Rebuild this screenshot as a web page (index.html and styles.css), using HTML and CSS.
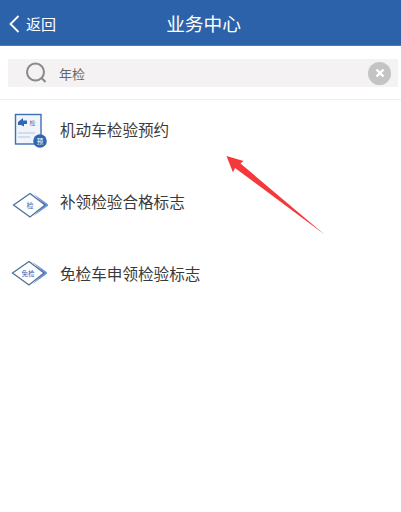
FILE: index.html
```html
<!DOCTYPE html>
<html lang="zh">
<head>
<meta charset="utf-8">
<title>业务中心</title>
<link rel="stylesheet" href="styles.css">
</head>
<body>
<div class="page">
  <header class="bar">
    <div class="back">
      <svg class="chev" viewBox="0 0 12 20" width="12" height="20"><path d="M10.500 2 2.500 10l8 8" fill="none" stroke="#fff" stroke-width="1.800"/></svg>
      <span>返回</span>
    </div>
    <h1 class="title">业务中心</h1>
  </header>
  <div class="searchwrap">
    <div class="search">
      <svg class="mag" viewBox="0 0 22 22" width="22" height="22"><circle cx="10.500" cy="10" r="8.500" fill="none" stroke="#8a8a8a" stroke-width="2"/><path d="M16.500 16l4 4" stroke="#8a8a8a" stroke-width="2.200" fill="none"/></svg>
      <span class="query">年检</span>
      <span class="clear"><svg viewBox="0 0 10 10" width="10" height="10"><path d="M1.500 1.500l7 7M8.500 1.500l-7 7" stroke="#fff" stroke-width="2.400"/></svg></span>
    </div>
  </div>
  <ul class="list">
    <li class="item">
      <svg class="icon icon-doc" viewBox="0 0 36 36" width="36" height="36">
        <rect x="3.500" y="1.500" width="25.500" height="29.500" fill="#f1f5fb" stroke="#3f6fb3" stroke-width="1.400"/>
        <path d="M6 9l5-4v2.500h4v3.500h-3v2.500L9 12H6z" fill="#2f67b5"/>
        <text x="17.500" y="12" font-size="6" fill="#4a6fa8" class="t">检</text>
        <path d="M6 20h17M6 24h12" stroke="#b4c4dc" stroke-width="1.200"/>
        <circle cx="28" cy="28" r="6.800" fill="#2f67b5"/>
        <text x="24.800" y="30.500" font-size="6.500" fill="#fff" class="t">预</text>
      </svg>
      <span class="label">机动车检验预约</span>
    </li>
    <li class="item">
      <svg class="icon icon-mark" viewBox="0 0 36 36" width="36" height="36">
        <path d="M21 6.500 37 18 21 29.500 33 18z" fill="#7096da"/>
        <path d="M18 6.500 33 18 18 30 1.500 18z" fill="#fff" stroke="#4f7097" stroke-width="1.300"/>
        <text x="14.500" y="21" font-size="7" fill="#2f67b5" class="t">检</text>
      </svg>
      <span class="label">补领检验合格标志</span>
    </li>
    <li class="item">
      <svg class="icon icon-free" viewBox="0 0 36 36" width="36" height="36">
        <path d="M21 6.500 37 18 21 29.500 33 18z" fill="#7096da"/>
        <path d="M18 6.500 33 18 18 30 1.500 18z" fill="#fff" stroke="#4f7097" stroke-width="1.300"/>
        <text x="10.500" y="20.500" font-size="6.500" fill="#2f67b5" class="t">免检</text>
      </svg>
      <span class="label">免检车申领检验标志</span>
    </li>
  </ul>
  <svg class="arrow" viewBox="0 0 401 512" width="401" height="512"><path d="M226.500 156 243.500 161 240.500 163.500 324.500 234.500 235 168 233 172.500z" fill="#f5383a"/></svg>
</div>
</body>
</html>
```
FILE: styles.css
```css
* { box-sizing: border-box; }
html, body { margin: 0; padding: 0; background: #fff; }
body { font-family: "Noto Sans CJK SC", "Liberation Sans", sans-serif; }
.page { position: relative; width: 401px; height: 512px; overflow: hidden; }
.bar { position: relative; height: 46px; padding-left: 6px; background: #2b62a9; color: #fff; display: flex; align-items: center; justify-content: center; border-bottom: 1px solid #4a7cbb; }
.back { position: absolute; left: 8px; top: 14px; display: flex; align-items: center; gap: 6px; font-size: 15px; line-height: 20px; }
.chev { flex: none; }
.title { margin: 0; font-size: 18.700px; font-weight: 400; line-height: 24px; }
.searchwrap { padding: 13px 3px 0 8px; height: 54px; border-bottom: 1px solid #eeeeee; }
.search { height: 28px; background: #f4f2f3; display: flex; align-items: center; padding-left: 17px; padding-right: 7px; }
.mag { flex: none; }
.query { margin-left: 12px; font-size: 13px; color: #666; flex: 1; }
.clear { width: 23px; height: 23px; border-radius: 50%; background: #c4c4c4; display: flex; align-items: center; justify-content: center; }
.list { list-style: none; margin: 0; padding: 0; }
.item { height: 72px; display: flex; align-items: flex-start; padding-left: 12px; gap: 12px; font-size: 15.600px; color: #3a3a3a; }
.label { margin-top: 19px; line-height: 20px; }
.icon { flex: none; }
.icon-doc { margin-top: 13px; }
.icon-mark { margin-top: 15px; }
.icon-free { margin-top: 11px; margin-left: -1px; margin-right: 1px; }
.t { font-family: "Noto Sans CJK SC", sans-serif; }
.arrow { position: absolute; left: 0; top: 0; pointer-events: none; }
```
